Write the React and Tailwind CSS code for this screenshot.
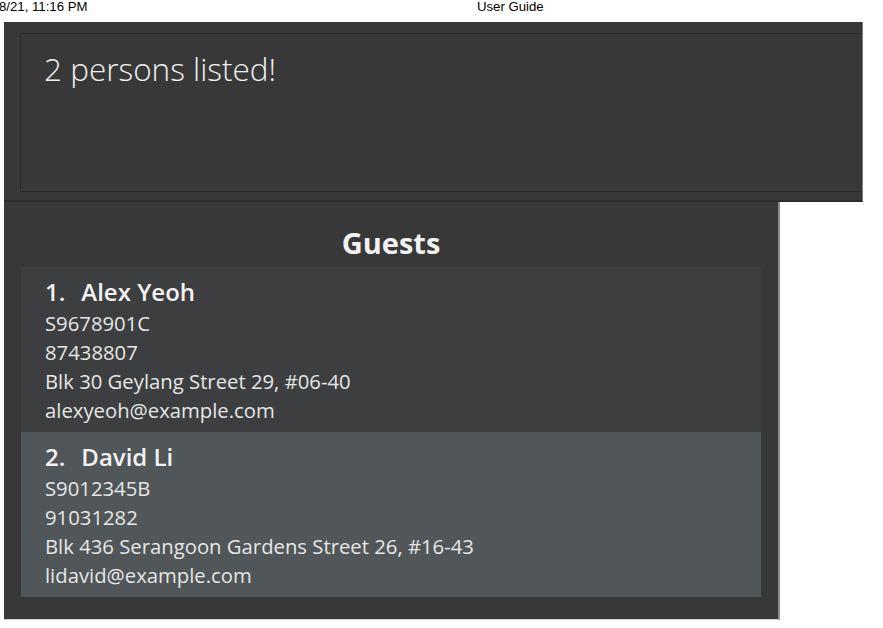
const guests = [
  {
    name: "Alex Yeoh",
    id: "S9678901C",
    phone: "87438807",
    address: "Blk 30 Geylang Street 29, #06-40",
    email: "alexyeoh@example.com",
  },
  {
    name: "David Li",
    id: "S9012345B",
    phone: "91031282",
    address: "Blk 436 Serangoon Gardens Street 26, #16-43",
    email: "lidavid@example.com",
  },
];

function GuestCard({ guest, index }) {
  const bg = index % 2 === 0 ? "bg-[#3c3e3f]" : "bg-[#515658]";
  return (
    <div className={`${bg} pl-[24px] pt-[10px] pb-[7px]`}>
      <p className="text-[24px] leading-[30px] font-semibold text-[#f2f2f2]">
        {index + 1}.<span className="inline-block w-[16px]" />{guest.name}
      </p>
      <div className="mt-[2px] text-[20.3px] leading-[29px] text-[#e6e6e6]">
        <p>{guest.id}</p>
        <p>{guest.phone}</p>
        <p>{guest.address}</p>
        <p>{guest.email}</p>
      </div>
    </div>
  );
}

export default function App() {
  return (
    <div className="w-[883px] h-[628px] bg-white overflow-hidden font-['Open_Sans',sans-serif]">
      {/* print header */}
      <div className="flex h-[22px] font-['Liberation_Sans',Arial,sans-serif] text-[13.2px] leading-[14px] text-black">
        <span className="w-[478px] -ml-[1px]">8/21, 11:16 PM</span>
        <span>User Guide</span>
      </div>

      {/* result display */}
      <div className="ml-[4px] w-[859px] h-[180px] bg-[#383838] border-r border-r-[#7c7c7c] border-b-2 border-b-[#2c2c2c] pl-[16px] pt-[11px] overflow-hidden">
        <div className="w-[900px] h-[159px] border border-[#2a2a2a] pl-[23px] pt-[16px]">
          <p className="text-[31.5px] leading-[38px] font-light text-[#f0f0f0]">2 persons listed!</p>
        </div>
      </div>

      {/* guest list */}
      <div className="ml-[4px] w-[776px] h-[418px] bg-[#383838] border-r-2 border-r-[#8a8a8a] border-b border-b-[#d0d0d0] pl-[17px] pt-[23px]">
        <h2 className="w-[740px] text-center text-[29px] leading-[36px] font-bold text-[#f2f2f2] mb-[6px]">Guests</h2>
        <div className="w-[740px]">
          {guests.map((g, i) => (
            <GuestCard key={g.id} guest={g} index={i} />
          ))}
        </div>
      </div>
    </div>
  );
}
